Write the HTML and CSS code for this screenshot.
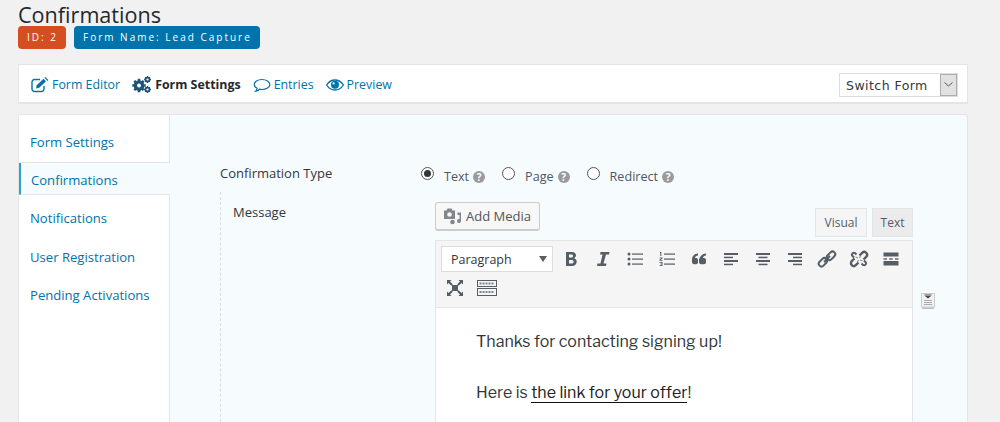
FILE: index.html
```html
<!DOCTYPE html>
<html lang="en">
<head>
<meta charset="utf-8">
<title>Confirmations</title>
<link rel="stylesheet" href="styles.css">
</head>
<body>
<div class="page">
  <h1 class="title">Confirmations</h1>
  <div class="badges">
    <span class="badge badge-id">ID: 2</span>
    <span class="badge badge-name">Form Name: Lead Capture</span>
  </div>
  <nav class="toolbar">
    <a class="tool">
      <svg class="ic" width="18" height="16" viewBox="0 0 18 16"><path d="M13 9v3a2.500 2.500 0 0 1-2.500 2.500H3.500A2.500 2.500 0 0 1 1 12V5a2.500 2.500 0 0 1 2.500-2.500H9" fill="none" stroke="#0073aa" stroke-width="1.400"/><path d="M5 11.500l.7-3.200 6.800-6.600 2.500 2.500-6.800 6.600z" fill="#0073aa"/><path d="M13.400.800l1-.7 3 2.800-.8 1z" fill="#0073aa"/></svg>
      Form Editor</a>
    <a class="tool tool-active">
      <svg class="ic" width="19" height="17" viewBox="0 0 19 17"><circle cx="7" cy="9.500" r="3.600" fill="none" stroke="#1d5477" stroke-width="3.400"/><g stroke="#1d5477" stroke-width="2.600"><path d="M7 2.800v13.400M.300 9.500h13.400M2.300 4.800l9.400 9.400M2.300 14.200l9.400-9.400"/></g><circle cx="7" cy="9.500" r="2" fill="#fff"/><circle cx="15.500" cy="3.500" r="2" fill="none" stroke="#1d5477" stroke-width="1.700"/><path d="M15.500 .1v6.800M12.100 3.500h6.800M13.200 1.200l4.600 4.600M13.200 5.800l4.600-4.600" stroke="#1d5477" stroke-width="1.300"/><circle cx="15.500" cy="3.500" r="1.100" fill="#fff"/><circle cx="15.500" cy="13.500" r="2" fill="none" stroke="#1d5477" stroke-width="1.700"/><path d="M15.500 10.100v6.800M12.100 13.500h6.800M13.200 11.200l4.600 4.600M13.200 15.800l4.600-4.600" stroke="#1d5477" stroke-width="1.300"/><circle cx="15.500" cy="13.500" r="1.100" fill="#fff"/></svg>
      Form Settings</a>
    <a class="tool">
      <svg class="ic" width="18" height="16" viewBox="0 0 18 16"><path d="M9 2.500c4.300 0 7.800 2.200 7.800 5S13.300 12.500 9 12.500c-.9 0-1.700-.1-2.500-.3-1.100 1-2.400 1.800-3.800 2 .8-.8 1.300-1.700 1.400-2.900C2.300 10.400 1.200 9.100 1.200 7.500 1.200 4.700 4.700 2.500 9 2.500z" fill="none" stroke="#0073aa" stroke-width="1.200"/></svg>
      Entries</a>
    <a class="tool">
      <svg class="ic" width="18" height="14" viewBox="0 0 18 14"><path d="M.6 7C2.700 3.700 5.600 2 9 2s6.300 1.700 8.400 5c-2.100 3.300-5 5-8.400 5S2.700 10.300.6 7z" fill="none" stroke="#0073aa" stroke-width="1.300"/><circle cx="9" cy="6.800" r="4" fill="#0073aa"/><circle cx="7.600" cy="5.400" r="1.100" fill="#fff"/></svg>
      Preview</a>
    <div class="switch">
      <span class="switch-label">Switch Form</span>
      <span class="switch-btn"><svg width="9" height="5" viewBox="0 0 9 5"><path d="M.5.500l4 3.500 4-3.500" fill="none" stroke="#555" stroke-width="1"/></svg></span>
    </div>
  </nav>
  <section class="panel">
    <ul class="side">
      <li class="side-item"><a>Form Settings</a></li>
      <li class="side-item side-active"><a>Confirmations</a></li>
      <li class="side-item"><a>Notifications</a></li>
      <li class="side-item"><a>User Registration</a></li>
      <li class="side-item"><a>Pending Activations</a></li>
    </ul>
    <div class="content">
      <div class="type-row">
        <div class="type-label">Confirmation Type</div>
        <div class="radios">
          <label class="radio"><span class="dot dot-on"></span><span class="radio-text">Text</span><span class="help">?</span></label>
          <label class="radio"><span class="dot"></span><span class="radio-text">Page</span><span class="help">?</span></label>
          <label class="radio"><span class="dot"></span><span class="radio-text">Redirect</span><span class="help">?</span></label>
        </div>
      </div>
      <div class="msg-row">
        <div class="msg-label">Message</div>
        <div class="editor-col">
          <div class="editor-top">
            <button class="media">
              <svg width="19" height="18" viewBox="0 0 19 18"><path d="M1 3.500h2.500L4.500 1.500h4l1 2H12v8.500H1z" fill="#82878c"/><circle cx="6.500" cy="7.500" r="2.300" fill="#f7f7f7"/><path d="M14.500 5.500h3.500v8.500a2 2 0 1 1-1.500-1.900V8h-2z" fill="#82878c"/><circle cx="9.500" cy="15" r="2.300" fill="#82878c"/></svg>
              Add Media</button>
            <div class="tabs"><span class="tab tab-on">Visual</span><span class="tab">Text</span></div>
          </div>
          <div class="editor">
            <div class="bar">
              <div class="format"><span>Paragraph</span><i class="caret"></i></div>
              <span class="mce"><svg viewBox="0 0 20 20"><path d="M5 3h6c2.500 0 4 1.300 4 3.300 0 1.400-.8 2.400-2 2.900 1.700.4 2.700 1.600 2.700 3.300 0 2.600-1.800 4.500-4.700 4.500H5zm3 2.500v3h2.300c1.200 0 1.800-.6 1.800-1.500s-.6-1.500-1.800-1.500zm0 5.500v3.500h2.500c1.400 0 2.100-.7 2.100-1.800s-.7-1.700-2.100-1.700z" fill="#555d66" fill-rule="evenodd"/></svg></span>
              <span class="mce"><svg viewBox="0 0 20 20"><path d="M7.500 3h9l-.5 2.500h-3L10.500 14.500h3L13 17H4l.5-2.500h3L9.500 5.500h-2.500z" fill="#555d66"/></svg></span>
              <span class="mce"><svg viewBox="0 0 20 20"><g fill="#555d66"><circle cx="4" cy="5" r="1.500"/><circle cx="4" cy="10" r="1.500"/><circle cx="4" cy="15" r="1.500"/><rect x="7" y="4.500" width="11" height="1.200"/><rect x="7" y="9.500" width="11" height="1.200"/><rect x="7" y="14.500" width="11" height="1.200"/></g></svg></span>
              <span class="mce"><svg viewBox="0 0 20 20"><g fill="#555d66"><rect x="7" y="4.500" width="11" height="1.200"/><rect x="7" y="9.500" width="11" height="1.200"/><rect x="7" y="14.500" width="11" height="1.200"/><path d="M3 3h1.300v4H3.300V4H3zM2.500 8.500h3v1L3.700 11h1.800v.8h-3v-1l1.800-1.500H2.500zM2.500 13h3v4h-3v-.8h2v-.9h-1.500v-.6h1.500v-.9h-2z"/></g></svg></span>
              <span class="mce"><svg viewBox="0 0 20 20"><path d="M9 4.500v2c-1.800.2-2.800 1-3 2.500h1c1.200 0 2 .9 2 2.200v2c0 1.200-.9 2-2.100 2H5.200C3.900 15.200 3 14.300 3 13v-2.500C3 7.400 5 4.700 9 4.500zm8 0v2c-1.800.2-2.800 1-3 2.500h1c1.200 0 2 .9 2 2.200v2c0 1.200-.9 2-2.100 2h-2.700c-1.300 0-2.200-.9-2.200-2.200v-2.500C11 7.400 13 4.700 17 4.500z" fill="#555d66"/></svg></span>
              <span class="mce"><svg viewBox="0 0 20 20"><g fill="#555d66"><rect x="3" y="4" width="14" height="2"/><rect x="3" y="7.700" width="9" height="1.500"/><rect x="3" y="11" width="14" height="2"/><rect x="3" y="14.700" width="9" height="1.500"/></g></svg></span>
              <span class="mce"><svg viewBox="0 0 20 20"><g fill="#555d66"><rect x="3" y="4" width="14" height="2"/><rect x="5.500" y="7.700" width="9" height="1.500"/><rect x="3" y="11" width="14" height="2"/><rect x="5.500" y="14.700" width="9" height="1.500"/></g></svg></span>
              <span class="mce"><svg viewBox="0 0 20 20"><g fill="#555d66"><rect x="3" y="4" width="14" height="2"/><rect x="8" y="7.700" width="9" height="1.500"/><rect x="3" y="11" width="14" height="2"/><rect x="8" y="14.700" width="9" height="1.500"/></g></svg></span>
              <span class="mce"><svg viewBox="0 0 20 20"><g fill="none" stroke="#555d66" stroke-width="2"><rect x="1.200" y="10.500" width="9.500" height="5.500" rx="2.750" transform="rotate(-45 5.950 13.250)"/><rect x="9.300" y="4" width="9.500" height="5.500" rx="2.750" transform="rotate(-45 14.050 6.750)"/></g><path d="M7 13l6-6" stroke="#555d66" stroke-width="2"/></svg></span>
              <span class="mce"><svg viewBox="0 0 20 20"><g fill="none" stroke="#555d66" stroke-width="2.400"><path d="M10.500 6.500l2.700-2.700a2.800 2.800 0 0 1 4 4l-2.700 2.700"/><path d="M9.500 13.500l-2.700 2.700a2.800 2.800 0 0 1-4-4l2.700-2.700"/></g><g fill="none" stroke="#555d66" stroke-width="2"><path d="M7.500 5.500L6 4a2 2 0 0 0-2.700 2.800l1.700 1.700"/><path d="M12.500 14.500L14 16a2 2 0 0 0 2.700-2.800l-1.700-1.700"/></g><path d="M9 9L6.500 8M11 11l2.500 1M10.500 9l1-2M9.500 11l-1 2" stroke="#8d9298" stroke-width="1.200"/></svg></span>
              <span class="mce"><svg viewBox="0 0 20 20"><g fill="#555d66"><rect x="2.500" y="3.500" width="15" height="4"/><rect x="2.500" y="9.300" width="3.500" height="1.400"/><rect x="8.200" y="9.300" width="3.500" height="1.400"/><rect x="14" y="9.300" width="3.500" height="1.400"/><rect x="2.500" y="12" width="15" height="4.500"/></g></svg></span>
              <span class="mce mce-wrap"><svg viewBox="0 0 20 20"><path d="M2 2h4.500L5 3.500 7.800 6.300 6.300 7.800 3.500 5 2 6.500zM18 2v4.500L16.500 5l-2.800 2.800-1.500-1.500L15 3.500 13.500 2zM2 18v-4.500L3.500 15l2.800-2.800 1.500 1.500L5 16.500 6.500 18zM18 18h-4.500l1.500-1.500-2.800-2.800 1.500-1.500L16.500 15l1.500-1.500z" fill="#555d66"/><rect x="7" y="7" width="6" height="6" fill="#555d66"/></svg></span>
              <span class="mce"><svg viewBox="0 0 20 20"><g fill="none" stroke="#555d66"><rect x=".5" y="2.500" width="19" height="6"/><rect x=".5" y="10.500" width="19" height="7"/></g><g stroke="#7d848b" stroke-width="2" stroke-dasharray="2 1"><path d="M2.500 5.500h15"/><path d="M2.500 14h15"/></g></svg></span>
            </div>
            <div class="body-text">
              <p>Thanks for contacting signing up!</p>
              <p>Here is <a class="offer">the link for your offer</a>!</p>
            </div>
          </div>
        </div>
        <div class="merge"><svg width="14" height="16" viewBox="0 0 14 16"><rect x=".5" y=".5" width="13" height="13.500" fill="#f1f1f1" stroke="#ccc"/><rect x="1" y="14.500" width="12" height="1.500" fill="#bbb"/><path d="M4 3h6L7 5.500z" fill="#444"/><path d="M3.500 2h7" stroke="#444"/><path d="M3 7.500h8M3 9.500h8M3 11.500h8" stroke="#aaa"/></svg></div>
      </div>
    </div>
  </section>
</div>
</body>
</html>
```
FILE: styles.css
```css
* { box-sizing: border-box; }
html, body { margin: 0; padding: 0; height: 422px; overflow: hidden; }
body { background: #f1f1f1; color: #23282d; font-family: "Open Sans", sans-serif; font-size: 13px; }
.page { padding: 0 32px 0 18px; }
.title { margin: 0; height: 26px; font-size: 21.600px; font-weight: 400; line-height: 29px; color: #23282d; }
.badges { display: flex; gap: 8px; height: 23px; }
.badge { display: block; padding: 0 0 0 9px; line-height: 23px; border-radius: 4px; color: #fff; font-size: 10px; letter-spacing: 2px; white-space: nowrap; }
.badge-id { background: #d54e21; width: 48px; }
.badge-name { background: #0073aa; width: 186px; }
.toolbar { margin-top: 15px; height: 40px; display: flex; align-items: center; padding: 2px 9px 0 12px; background: #fff; border: 1px solid #e5e5e5; border-bottom-width: 2px; gap: 12px; }
.tool { display: flex; align-items: center; gap: 3px; color: #0073aa; font-size: 12.400px; }
.tool-active { color: #23282d; font-weight: 700; font-size: 12.400px; gap: 4px; }
.ic { display: block; flex: none; }
.switch { margin-left: auto; display: flex; width: 119px; height: 24px; border: 1px solid #ddd; background: #fff; align-items: stretch; }
.switch-label { flex: 1; padding-left: 6px; line-height: 24px; color: #32373c; letter-spacing: .45px; font-family: "DejaVu Sans", sans-serif; font-size: 12.500px; }
.switch-btn { width: 17px; background: #e1e1e1; border: 1px solid #adadad; display: flex; align-items: center; justify-content: center; }
.panel { margin-top: 10px; display: flex; height: 320px; background: #f6fbfe; border: 1px solid #e5e5e5; border-bottom: 0; border-radius: 3px 3px 0 0; overflow: hidden; }
.side { margin: 0; padding: 0; list-style: none; width: 151px; flex: none; background: #fff; border-right: 1px solid #e5e5e5; }
.side-item { line-height: 38px; padding-left: 11px; font-size: 13.100px; color: #0073aa; }
.side-item:nth-child(1) { height: 48px; padding-top: 8px; border-bottom: 1px solid #e5e5e5; }
.side-item:nth-child(2) { height: 32px; line-height: 34px; width: 151px; padding-left: 10px; background: #f6fbfe; border-left: 2px solid #2ea2cc; border-bottom: 1px solid #e5e5e5; }
.side-item:nth-child(3) { height: 44px; line-height: 46px; }
.side-item:nth-child(4) { height: 37px; line-height: 36px; }
.side-item:nth-child(5) { height: 39px; line-height: 38px; }
.content { flex: 1; padding: 46px 0 0 50px; min-width: 0; }
.type-row { display: flex; height: 31px; }
.type-label { width: 201px; color: #32373c; line-height: 24px; }
.radios { display: flex; gap: 17px; }
.radio { display: flex; color: #50575e; line-height: 32px; height: 30px; font-size: 12.600px; }
.dot { width: 13px; height: 13px; border-radius: 50%; border: 1px solid #555; background: #fff; margin-top: 6px; margin-right: 10px; position: relative; }
.dot-on::after { content: ""; position: absolute; left: 2px; top: 2px; width: 7px; height: 7px; border-radius: 50%; background: #32373c; }
.radio-text { margin-right: 4px; }
.help { width: 12px; height: 12px; margin-top: 10px; border-radius: 50%; background: #9a9a9a; color: #fff; font-size: 10px; font-weight: 700; line-height: 12px; text-align: center; }
.msg-row { display: flex; border-left: 1px dashed #dcdcdc; padding-left: 12px; height: 240px; }
.msg-label { width: 202px; padding-top: 8px; color: #32373c; line-height: 24px; }
.editor-col { width: 478px; flex: none; }
.editor-top { display: flex; justify-content: space-between; height: 48px; padding-top: 10px; align-items: flex-start; }
.media { display: flex; align-items: center; gap: 4px; height: 29px; width: 105px; padding: 0 7px; background: #f7f7f7; border: 1px solid #ccc; border-bottom-width: 2px; border-radius: 3px; font: 13px "Open Sans", sans-serif; color: #555; }
.tabs { display: flex; gap: 5px; padding-top: 6px; }
.tab { height: 29px; width: 41px; text-align: center; background: #ebebeb; border: 1px solid #e5e5e5; line-height: 27px; font-size: 12px; color: #555d66; }
.tab-on { width: 52px; background: #f5f5f5; }
.editor { border: 1px solid #e5e5e5; background: #fff; height: 300px; }
.bar { display: flex; flex-wrap: wrap; align-items: flex-start; align-content: flex-start; height: 67px; background: #f5f5f5; border-bottom: 1px solid #e5e5e5; padding: 5px 0 0 5px; row-gap: 3px; }
.format { display: flex; align-items: center; justify-content: space-between; width: 112px; height: 26px; margin-right: 2px; padding: 0 5px 0 9px; background: #fff; border: 1px solid #ddd; color: #32373c; font-size: 12.500px; }
.caret { border-left: 4.500px solid transparent; border-right: 4.500px solid transparent; border-top: 6px solid #555d66; width: 0; height: 0; }
.mce { width: 32px; height: 26px; display: flex; align-items: center; justify-content: center; }
.mce-wrap { margin-left: -2px; }
.mce svg { width: 20px; height: 20px; display: block; }
.body-text { padding: 21px 40px; font-family: "Libre Franklin", "Roboto", sans-serif; font-size: 16px; line-height: 26px; color: #32373c; }
.body-text p { margin: 0 0 25px; }
.offer { color: #222; border-bottom: 1px solid #111; }
.merge { margin-left: 8px; padding-top: 101px; }
.merge svg { display: block; }
```
